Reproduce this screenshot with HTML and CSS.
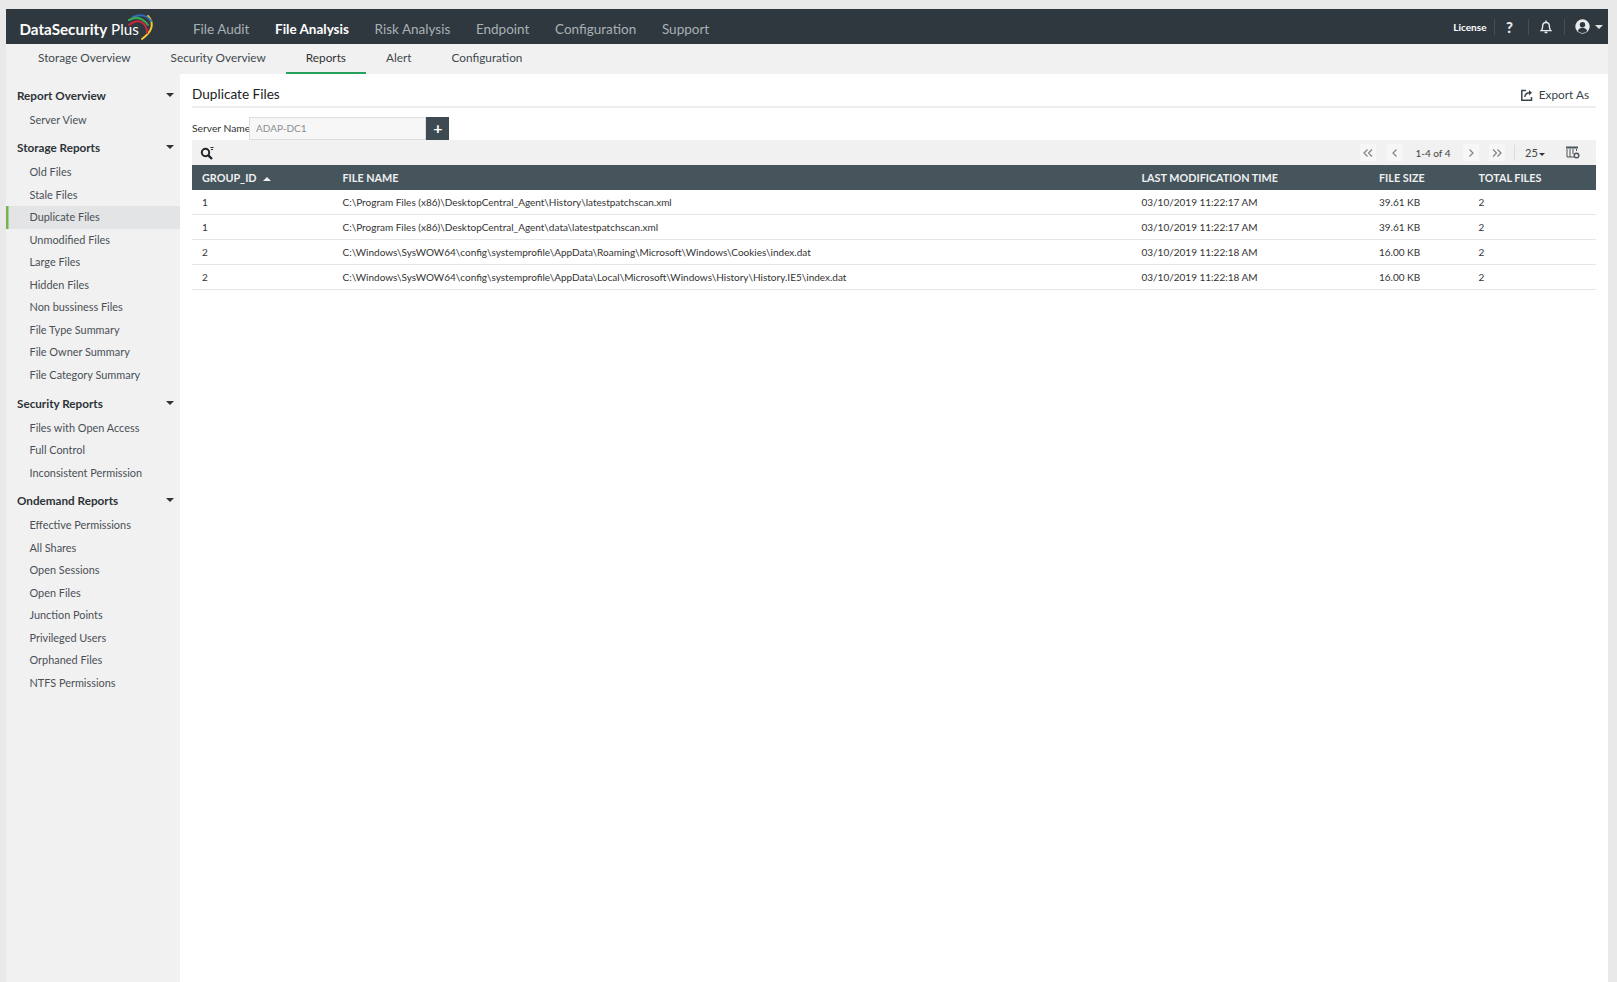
FILE: index.html
```html
<!DOCTYPE html>
<html lang="en">
<head>
<meta charset="utf-8">
<title>DataSecurity Plus - Duplicate Files</title>
<link rel="stylesheet" href="styles.css">
</head>
<body>
<div class="app">
  <header class="topbar">
    <div class="logo">
      <span class="logo-text"><b>DataSecurity</b> Plus</span>
      <svg class="logo-arc" width="30" height="28" viewBox="0 0 30 28" fill="none" stroke-linecap="round">
        <path d="M22 3Q32 14 16 26" stroke="#f2c531" stroke-width="2"/>
        <path d="M7 4Q18 -1 25 8" stroke="#2d6fb8" stroke-width="2"/>
        <path d="M3 7Q14 1 22 12" stroke="#3aa655" stroke-width="2"/>
        <path d="M3 12Q12 5 18 11Q21 14 21 20" stroke="#c8283c" stroke-width="2"/>
      </svg>
    </div>
    <nav class="mainnav">
      <a>File Audit</a>
      <a class="on">File Analysis</a>
      <a>Risk Analysis</a>
      <a>Endpoint</a>
      <a>Configuration</a>
      <a>Support</a>
    </nav>
    <div class="tools">
      <span class="license">License</span>
      <i class="vsep"></i>
      <span class="help">?</span>
      <i class="vsep"></i>
      <svg class="bell" width="12" height="14" viewBox="0 0 12 14" fill="none" stroke="#e8eaeb" stroke-width="1.4"><path d="M1.2 10.6c1-1 1.4-2 1.4-4.2C2.600 4 4 2.500 6 2.500S9.400 4 9.400 6.400c0 2.200.4 3.200 1.400 4.200z"/><path d="M4.600 12.400h2.800" stroke-width="1.600"/><path d="M6 .5v2"/></svg>
      <i class="vsep"></i>
      <svg class="user" width="15" height="15" viewBox="0 0 15 15"><circle cx="7.500" cy="7.500" r="7.200" fill="#e8eaeb"/><circle cx="7.500" cy="5.800" r="2.700" fill="#2f383f"/><path d="M2.800 12c.8-2.400 2.600-3.300 4.700-3.300s3.900.9 4.700 3.300c-1.200 1.300-2.900 2-4.700 2s-3.500-.7-4.700-2z" fill="#2f383f"/></svg>
      <i class="caret caret-light"></i>
    </div>
  </header>

  <nav class="subnav">
    <a>Storage Overview</a>
    <a>Security Overview</a>
    <a class="on">Reports</a>
    <a>Alert</a>
    <a>Configuration</a>
  </nav>

  <div class="body">
    <aside class="sidebar">
      <section class="group">
        <h3>Report Overview <i class="caret"></i></h3>
        <a>Server View</a>
      </section>
      <section class="group">
        <h3>Storage Reports <i class="caret"></i></h3>
        <a>Old Files</a>
        <a>Stale Files</a>
        <a class="on">Duplicate Files</a>
        <a>Unmodified Files</a>
        <a>Large Files</a>
        <a>Hidden Files</a>
        <a>Non bussiness Files</a>
        <a>File Type Summary</a>
        <a>File Owner Summary</a>
        <a>File Category Summary</a>
      </section>
      <section class="group">
        <h3>Security Reports <i class="caret"></i></h3>
        <a>Files with Open Access</a>
        <a>Full Control</a>
        <a>Inconsistent Permission</a>
      </section>
      <section class="group">
        <h3>Ondemand Reports <i class="caret"></i></h3>
        <a>Effective Permissions</a>
        <a>All Shares</a>
        <a>Open Sessions</a>
        <a>Open Files</a>
        <a>Junction Points</a>
        <a>Privileged Users</a>
        <a>Orphaned Files</a>
        <a>NTFS Permissions</a>
      </section>
    </aside>

    <main class="content">
      <div class="titlebar">
        <h1>Duplicate Files</h1>
        <a class="export">
          <svg width="12" height="12" viewBox="0 0 12 12" fill="none" stroke="#3a444b" stroke-width="1.500"><path d="M5 1.500H.8v9.700h9.700V8"/><path d="M3.800 8c.3-2.800 2-4.300 5-4.300"/><path d="M8 1l3 2.700-3 2.700z" fill="#3a444b" stroke="none"/></svg>
          Export As
        </a>
      </div>

      <div class="filter">
        <label>Server Name</label>
        <span class="field">ADAP-DC1</span>
        <button class="plus" type="button">+</button>
      </div>

      <div class="toolbar">
        <svg class="search" width="14" height="14" viewBox="0 0 14 14" fill="none" stroke="#20272c"><circle cx="5.500" cy="6.500" r="3.700" stroke-width="2"/><path d="M8.300 9.300L12 13" stroke-width="2.400"/><path d="M10.500 1.500h3M11 3.500h2" stroke-width="1"/></svg>
        <div class="pager">
          <span class="pg"><svg width="10" height="8" viewBox="0 0 10 8"><path d="M4.500 .5L1 4l3.500 3.500M9 .5L5.500 4 9 7.500"/></svg></span>
          <span class="pg"><svg width="6" height="8" viewBox="0 0 6 8"><path d="M4.500 .5L1 4l3.500 3.500"/></svg></span>
          <span class="count">1-4 of 4</span>
          <span class="pg"><svg width="6" height="8" viewBox="0 0 6 8"><path d="M1.500 .5L5 4 1.500 7.500"/></svg></span>
          <span class="pg"><svg width="10" height="8" viewBox="0 0 10 8"><path d="M1 .5L4.500 4 1 7.500M5.500 .5L9 4 5.500 7.500"/></svg></span>
          <i class="vsep dark"></i>
          <span class="size">25<i class="caret"></i></span>
          <svg class="cols" width="14" height="13" viewBox="0 0 14 13" fill="none" stroke="#4a545b"><path d="M0 1.500h12" stroke-width="2"/><path d="M1 3v8h7M4 3v8M7 3v5M10.500 3v2" stroke-width="1"/><circle cx="10.500" cy="9.500" r="2.300" stroke-width="1.400"/></svg>
        </div>
      </div>

      <table class="grid">
        <thead>
          <tr>
            <th class="c-id">GROUP_ID <i class="caret-up"></i></th>
            <th class="c-name">FILE NAME</th>
            <th class="c-time">LAST MODIFICATION TIME</th>
            <th class="c-size">FILE SIZE</th>
            <th class="c-total">TOTAL FILES</th>
          </tr>
        </thead>
        <tbody>
          <tr><td>1</td><td>C:\Program Files (x86)\DesktopCentral_Agent\History\latestpatchscan.xml</td><td>03/10/2019 11:22:17 AM</td><td>39.61 KB</td><td>2</td></tr>
          <tr><td>1</td><td>C:\Program Files (x86)\DesktopCentral_Agent\data\latestpatchscan.xml</td><td>03/10/2019 11:22:17 AM</td><td>39.61 KB</td><td>2</td></tr>
          <tr><td>2</td><td>C:\Windows\SysWOW64\config\systemprofile\AppData\Roaming\Microsoft\Windows\Cookies\index.dat</td><td>03/10/2019 11:22:18 AM</td><td>16.00 KB</td><td>2</td></tr>
          <tr><td>2</td><td>C:\Windows\SysWOW64\config\systemprofile\AppData\Local\Microsoft\Windows\History\History.IE5\index.dat</td><td>03/10/2019 11:22:18 AM</td><td>16.00 KB</td><td>2</td></tr>
        </tbody>
      </table>
    </main>
  </div>
</div>
</body>
</html>
```
FILE: styles.css
```css
* { box-sizing: border-box; }
html, body { margin: 0; height: 100%; }
body {
  background: #e9e9e9;
  font-family: Lato, "Open Sans", sans-serif;
  font-size: 11px;
  color: #333;
  overflow: hidden;
}
.app {
  margin: 9px 9px 0 6px;
  height: 973px;
  display: flex;
  flex-direction: column;
  background: #fff;
}
.topbar {
  height: 35px;
  flex: none;
  display: flex;
  align-items: center;
  background: #2f383f;
  color: #fff;
}
.logo {
  width: 187px;
  flex: none;
  display: flex;
  align-items: center;
  padding-left: 13.500px;
}
.logo-text { font-size: 15.200px; color: #fff; font-weight: 400; white-space: nowrap; margin-top: 4px; }
.logo-text b { font-weight: 700; }
.logo-arc { margin-left: -13px; flex: none; }
.mainnav { display: flex; gap: 25.700px; font-size: 13.500px; color: #a9b0b4; padding-top: 4px; }
.mainnav .on { color: #fff; font-weight: 700; }
.tools { margin-left: auto; display: flex; align-items: center; padding-right: 5.500px; }
.license { font-size: 10px; font-weight: 700; color: #fff; margin-right: 7px; }
.vsep { display: block; width: 1px; height: 16px; background: #444e55; }
.help { font-size: 15px; font-weight: 900; color: #e8eaeb; width: 30px; margin-right: 3.500px; text-align: center; }
.bell { margin: 0 12px 0 10.500px; }
.user { margin-left: 10px; margin-right: 5px; }
.caret {
  display: inline-block;
  width: 0; height: 0;
  border-left: 4px solid transparent;
  border-right: 4px solid transparent;
  border-top: 4px solid #333;
  vertical-align: middle;
}
.caret-light { border-top-color: #dfe2e3; }
.subnav {
  height: 30px;
  flex: none;
  display: flex;
  padding-left: 12px;
  background: #f1f1f1;
  font-size: 11.800px;
  color: #41494f;
}
.subnav a { padding: 0 20px; line-height: 28px; height: 30px; border-bottom: 2px solid transparent; }
.subnav .on { border-bottom-color: #27a15b; color: #333; }
.body { flex: 1; display: flex; min-height: 0; }
.sidebar {
  width: 174px;
  flex: none;
  background: #f1f1f1;
  padding-top: 8.500px;
}
.group { margin-bottom: 4px; }
.group h3 {
  margin: 0;
  height: 26px;
  padding: 0 6.500px 2px 11px;
  display: flex;
  justify-content: space-between;
  align-items: center;
  font-size: 11.700px;
  font-weight: 700;
  color: #2d3338;
}
.group a {
  display: block;
  height: 22.550px;
  line-height: 22.550px;
  padding-left: 23.500px;
  font-size: 10.900px;
  color: #4a5056;
}
.group a.on {
  background: #e3e4e6;
  box-shadow: inset 2.500px 0 0 #73b54b;
}
.content { flex: 1; min-width: 0; padding: 0 12px; }
.titlebar {
  height: 34px;
  display: flex;
  align-items: center;
  justify-content: space-between;
  border-bottom: 2px solid #eee;
  padding: 8px 7px 0 0;
}
.titlebar h1 { margin: 0; font-size: 13.600px; font-weight: 400; color: #222; }
.export { display: flex; align-items: center; gap: 6px; font-size: 11.800px; color: #3a444b; margin-top: 1px; }
.filter { display: flex; align-items: center; height: 23px; margin-top: 9px; }
.filter label { width: 57px; padding-bottom: 2px; font-size: 10.300px; color: #333; white-space: nowrap; }
.field {
  width: 177px;
  height: 23px;
  line-height: 21px;
  padding-left: 6px;
  background: #f7f7f7;
  border: 1px solid #ddd;
  color: #8a8f93;
  font-size: 10px;
}
.plus {
  width: 23px;
  height: 23px;
  border: 0;
  padding: 0 0 2px 1px;
  background: #3d4a52;
  color: #fff;
  font: 700 16px/21px Lato, sans-serif;
}
.toolbar {
  height: 25px;
  display: flex;
  align-items: center;
  justify-content: space-between;
  background: #f1f1f1;
  padding: 0 16px 0 8px;
}
.search { display: block; }
.pager { display: flex; align-items: center; font-size: 10px; color: #444; }
.pg {
  width: 16px;
  height: 17px;
  background: #f7f7f7;
  display: flex;
  align-items: center;
  justify-content: center;
}
.pg svg { fill: none; stroke: #7d8388; stroke-width: 1.200; display: block; }
.pg:nth-child(2) { margin-left: 11px; }
.count { width: 60px; text-align: center; }
.pg:nth-child(5) { margin-left: 10px; }
.vsep.dark { height: 16px; background: #ddd; margin: 0 10px 0 9px; }
.size { font-size: 11px; width: 41px; }
.size .caret { margin-left: 1px; border-left-width: 3.500px; border-right-width: 3.500px; border-top-width: 3.500px; }
.cols { display: block; }
.grid {
  width: 100%;
  border-collapse: separate;
  border-spacing: 0;
  table-layout: fixed;
  font-size: 10px;
  color: #333;
}
.grid th {
  height: 25px;
  padding: 0 0 0 10px;
  background: #46545c;
  color: #eef0f1;
  font-size: 10.800px;
  font-weight: 700;
  text-align: left;
}
.c-id { width: 140.500px; }
.c-name { width: 799px; }
.c-time { width: 237.500px; }
.c-size { width: 99.500px; }
.caret-up {
  display: inline-block;
  width: 0; height: 0;
  margin-left: 4px;
  border-left: 4px solid transparent;
  border-right: 4px solid transparent;
  border-bottom: 4px solid #eef0f1;
  vertical-align: middle;
}
.grid td {
  height: 25px;
  padding: 0 0 1px 10px;
  border-bottom: 1px solid #e6e6e6;
  white-space: nowrap;
}
```
